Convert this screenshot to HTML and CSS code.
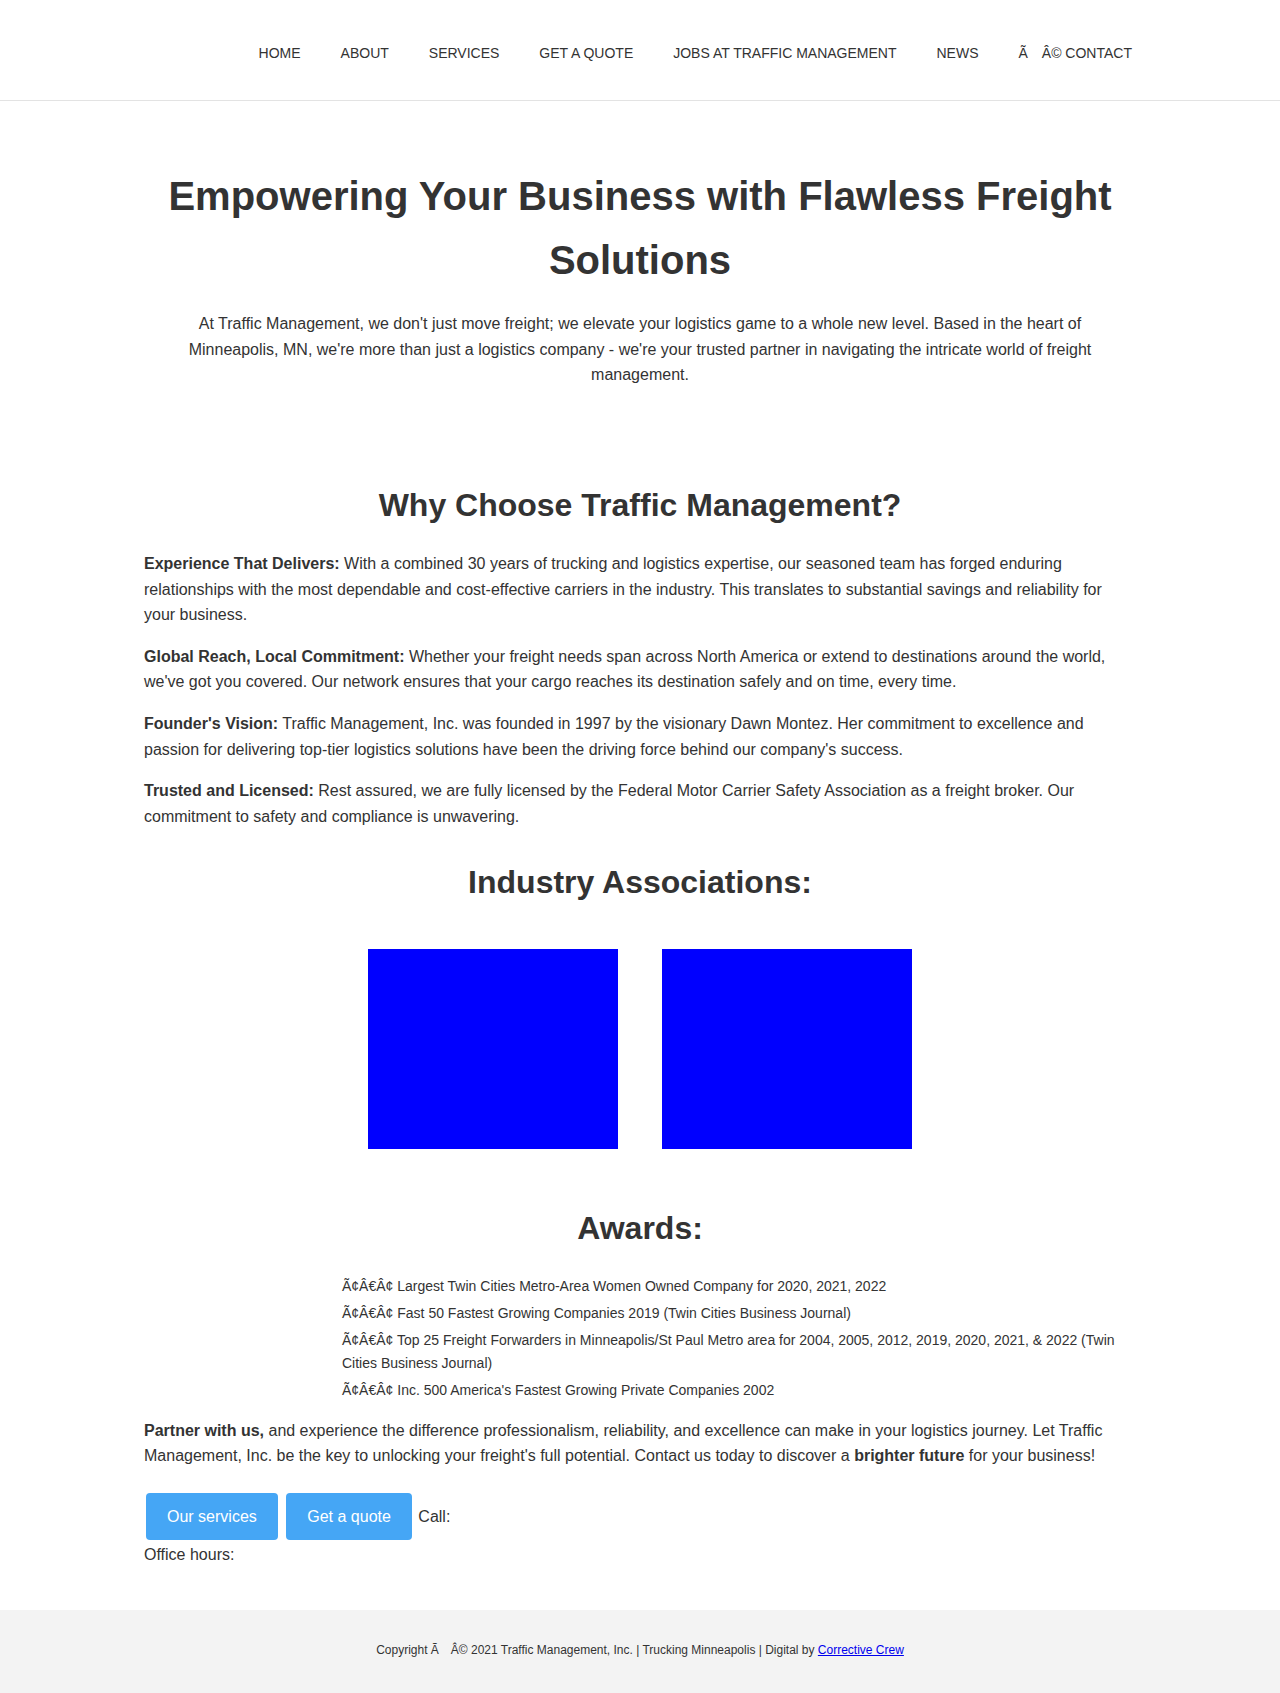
FILE: index.html
```html
<!DOCTYPE html>
<html lang="en">
<head>
    <meta charset="UTF-8">
    <meta name="viewport" content="width=device-width, initial-scale=1.0">
    <title>Trucking Minneapolis - Traffic Management, Inc.</title>
    <link rel="stylesheet" href="styles.css">
</head>
<body>
    <header class="site-header">
        <div class="container">
            <nav class="main-nav">
                <a href="#">HOME</a>
                <a href="#">ABOUT</a>
                <a href="#">SERVICES</a>
                <a href="#">GET A QUOTE</a>
                <a href="#">JOBS AT TRAFFIC MANAGEMENT</a>
                <a href="#">NEWS</a>
                <a href="#">Ã&emsp;Â© CONTACT</a>
            </nav>
        </div>
    </header>

    <main class="container">
        <section class="hero">
            <h1>Empowering Your Business with Flawless Freight Solutions</h1>
            <p>At Traffic Management, we don't just move freight; we elevate your logistics game to a whole new level. Based in the heart of Minneapolis, MN, we're more than just a logistics company - we're your trusted partner in navigating the intricate world of freight management.</p>
        </section>

        <section class="why">
            <h2>Why Choose Traffic Management?</h2>
            <p><strong>Experience That Delivers:</strong> With a combined 30 years of trucking and logistics expertise, our seasoned team has forged enduring relationships with the most dependable and cost-effective carriers in the industry. This translates to substantial savings and reliability for your business.</p>
            <p><strong>Global Reach, Local Commitment:</strong> Whether your freight needs span across North America or extend to destinations around the world, we've got you covered. Our network ensures that your cargo reaches its destination safely and on time, every time.</p>
            <p><strong>Founder's Vision:</strong> Traffic Management, Inc. was founded in 1997 by the visionary Dawn Montez. Her commitment to excellence and passion for delivering top-tier logistics solutions have been the driving force behind our company's success.</p>
            <p><strong>Trusted and Licensed:</strong> Rest assured, we are fully licensed by the Federal Motor Carrier Safety Association as a freight broker. Our commitment to safety and compliance is unwavering.</p>

            <h2>Industry Associations:</h2>
            <div class="associations">
                <div class="assoc-logo"></div>
                <div class="assoc-logo"></div>
            </div>

            <h2>Awards:</h2>
            <ul class="awards">
                <li>Ã¢Â€Â¢ Largest Twin Cities Metro-Area Women Owned Company for 2020, 2021, 2022</li>
                <li>Ã¢Â€Â¢ Fast 50 Fastest Growing Companies 2019 (Twin Cities Business Journal)</li>
                <li>Ã¢Â€Â¢ Top 25 Freight Forwarders in Minneapolis/St Paul Metro area for 2004, 2005, 2012, 2019, 2020, 2021, &amp; 2022 (Twin Cities Business Journal)</li>
                <li>Ã¢Â€Â¢ Inc. 500 America's Fastest Growing Private Companies 2002</li>
            </ul>

            <p><strong>Partner with us,</strong> and experience the difference professionalism, reliability, and excellence can make in your logistics journey. Let Traffic Management, Inc. be the key to unlocking your freight's full potential. Contact us today to discover a <strong>brighter future</strong> for your business!</p>

            <p class="cta">
                <a href="#" class="btn">Our services</a>
                <a href="#" class="btn">Get a quote</a>
                Call:<br>
                Office hours:
            </p>
        </section>
    </main>

    <footer class="site-footer">
        Copyright Ã&emsp;Â© 2021 Traffic Management, Inc. | Trucking Minneapolis | Digital by <a href="#">Corrective Crew</a>
    </footer>
</body>
</html>
```

FILE: styles.css
```css
* {
    box-sizing: border-box;
}

body {
    margin: 0;
    font-family: "Liberation Sans", Arial, Helvetica, sans-serif;
    font-size: 16px;
    line-height: 1.6;
    color: #333;
    background: #fff;
}

.container {
    max-width: 992px;
    margin: 0 auto;
}

/* header */

.site-header {
    height: 101px;
    padding-top: 6px;
    border-bottom: 1px solid #e3e3e3;
    display: flex;
    align-items: center;
}

.site-header .container {
    width: 100%;
}

.main-nav {
    display: flex;
    justify-content: flex-end;
    gap: 40px;
    padding-right: 4px;
}

.main-nav a {
    font-size: 14px;
    color: #333;
    text-decoration: none;
}

/* hero */

.hero {
    padding-top: 63px;
    text-align: center;
}

.hero h1 {
    margin: 0;
    font-size: 40px;
    line-height: 64px;
}

.hero p {
    margin: 19px 0 0;
    padding: 0 40px;
}

/* content */

.why {
    padding-top: 92px;
    padding-bottom: 26px;
}

.why h2 {
    margin: 28px 0 20px;
    font-size: 32px;
    text-align: center;
}

.why h2:first-child {
    margin-top: 0;
}

.why p {
    margin: 0 0 16px;
}

.associations {
    display: flex;
    justify-content: center;
    gap: 44px;
    margin: 40px 0 54px;
}

.assoc-logo {
    width: 250px;
    height: 200px;
    background: #0000ff;
}

.awards {
    list-style: none;
    margin: 21px 0 16px 198px;
    padding: 0;
    font-size: 14px;
}

.awards li {
    margin-bottom: 5px;
}

.why .cta {
    margin-top: 22px;
}

.btn {
    display: inline-block;
    margin: 2px;
    padding: 11px 21px;
    background-color: #45a6f5;
    color: #fff;
    border-radius: 4px;
    text-decoration: none;
}

/* footer */

.site-footer {
    background-color: #f3f3f3;
    padding: 31px 0 36px;
    font-size: 12px;
    text-align: center;
}

.site-footer a {
    color: #0000ee;
}
```
